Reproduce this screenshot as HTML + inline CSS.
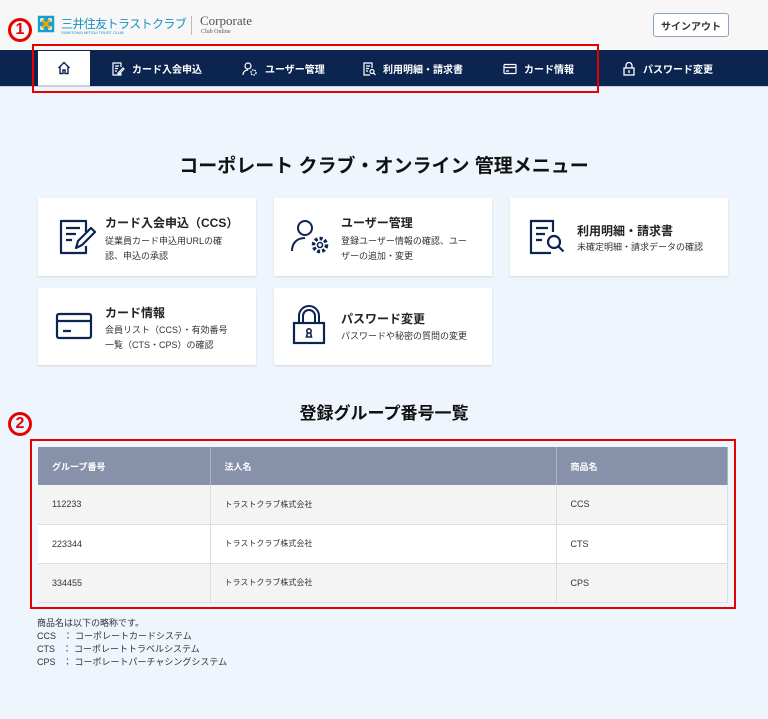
<!DOCTYPE html>
<html><head><meta charset="utf-8"><style>
*{margin:0;padding:0;box-sizing:border-box}
body{width:768px;height:719px;background:#eef5fc;font-family:"Liberation Sans","Noto Sans CJK JP",sans-serif;position:relative;overflow:hidden;color:#222}
.abs{position:absolute}
.hdr{left:0;top:0;width:768px;height:50px;background:#f7f7f7}
.nav{left:0;top:50px;width:768px;height:37px;background:#0b2550;border-bottom:1px solid #c8cfd8}
.ni{top:50px;height:37px;color:#fff;font-size:10px;font-weight:bold;display:flex;align-items:center;gap:7px}
.card{background:#fff;box-shadow:0 1px 2px rgba(0,0,0,.12);width:218px}
.card .t{position:absolute;left:67px;font-size:12px;font-weight:bold}
.card .d{position:absolute;left:67px;font-size:9px;line-height:15px;color:#333}
.card svg{position:absolute}
h2{position:absolute;width:768px;text-align:center;font-size:19px;font-weight:bold;color:#111}
table{position:absolute;left:38px;top:447px;width:690px;border-collapse:collapse;font-size:9px}
th{background:#8792aa;color:#fff;height:38px;text-align:left;padding-left:14px;border-right:1px solid #aab2c4;font-size:9px}
td{height:39px;padding-left:14px;border-right:1px solid #ddd;border-bottom:1px solid #ddd;color:#333}
tr:nth-child(even) td{background:#f4f4f4}
tr:nth-child(odd) td{background:#fff}
.red{border:2px solid #e60000}
.num{color:#e60000;font-weight:bold;width:24px;height:24px;border:3px solid #e60000;border-radius:50%;display:flex;align-items:center;justify-content:center;font-size:16px}
</style></head><body>
<div class="abs hdr"></div>
<svg class="abs" style="left:37px;top:15px" width="18" height="18" viewBox="0 0 18 18"><path d="M2 2h6v6H2zM10 2h6v6h-6zM2 10h6v6H2zM10 10h6v6h-6z" fill="none" stroke="#1aa0c8" stroke-width="2.4"/><path d="M5 5l8 8M13 5l-8 8" stroke="#f2a900" stroke-width="2.4"/></svg>
<div class="abs" style="left:61px;top:15px;font-size:12px;color:#1b8fc0;letter-spacing:-0.6px;white-space:nowrap">三井住友トラストクラブ</div>
<div class="abs" style="left:61px;top:30px;font-size:4px;color:#1b8fc0">SUMITOMO MITSUI TRUST CLUB</div>
<div class="abs" style="left:191px;top:16px;width:1px;height:19px;background:#bbb"></div>
<div class="abs" style="left:200px;top:13px;font-family:'Liberation Serif',serif;font-size:13px;color:#555">Corporate</div>
<div class="abs" style="left:201px;top:29px;font-family:'Liberation Serif',serif;font-size:6px;color:#555">Club Online</div>
<div class="abs" style="left:653px;top:13px;width:76px;height:24px;border:1px solid #8ea4c4;border-radius:3px;background:#fff;font-size:10px;font-weight:bold;color:#333;display:flex;align-items:center;justify-content:center">サインアウト</div>
<div class="abs nav"></div>
<div class="abs" style="left:38px;top:51px;width:52px;height:36px;background:#fff;border-bottom:2px solid #c8cfd8"></div>
<svg class="abs" style="left:57px;top:61px" width="14" height="14" viewBox="0 0 14 14"><path d="M1.5 7L7 1.5 12.5 7M3 6v6.5h3V9h2v3.5h3V6" fill="none" stroke="#0b2550" stroke-width="1.4"/></svg>
<div class="abs ni" style="left:111px"><svg width="14" height="14" viewBox="0 0 14 14"><path d="M10 5V1H2v12h8V11M4 4h4M4 6.5h3M4 9h2M7 11l5-5 1 1-5 5H7z" fill="none" stroke="#fff" stroke-width="1.2"/></svg>カード入会申込</div>
<div class="abs ni" style="left:242px"><svg width="16" height="14" viewBox="0 0 16 14"><circle cx="6" cy="4" r="3" fill="none" stroke="#fff" stroke-width="1.2"/><path d="M1 13c0-3 2-5 5-5" fill="none" stroke="#fff" stroke-width="1.2"/><circle cx="11.5" cy="10.5" r="2.5" fill="none" stroke="#fff" stroke-width="1.5" stroke-dasharray="1.5 1"/></svg>ユーザー管理</div>
<div class="abs ni" style="left:362px"><svg width="14" height="14" viewBox="0 0 14 14"><path d="M10 6V1H2v12h6M4 4h4M4 6.5h3M4 9h2" fill="none" stroke="#fff" stroke-width="1.2"/><circle cx="10" cy="9.5" r="2" fill="none" stroke="#fff" stroke-width="1.2"/><path d="M11.5 11l2 2" stroke="#fff" stroke-width="1.2"/></svg>利用明細・請求書</div>
<div class="abs ni" style="left:503px"><svg width="14" height="12" viewBox="0 0 14 12"><rect x="1" y="1.5" width="12" height="9" rx="1" fill="none" stroke="#fff" stroke-width="1.2"/><path d="M1 4.5h12M3 8h3" stroke="#fff" stroke-width="1.2"/></svg>カード情報</div>
<div class="abs ni" style="left:622px"><svg width="14" height="15" viewBox="0 0 14 15"><path d="M4 7V4.5a3 3 0 016 0V7" fill="none" stroke="#fff" stroke-width="1.3"/><rect x="2" y="7" width="10" height="7" fill="none" stroke="#fff" stroke-width="1.3"/><path d="M7 9v3" stroke="#fff" stroke-width="1.3"/></svg>パスワード変更</div>
<div class="abs red" style="left:32px;top:44px;width:567px;height:49px"></div>
<div class="abs num" style="left:8px;top:18px">1</div>

<h2 style="top:151px">コーポレート クラブ・オンライン 管理メニュー</h2>

<div class="abs card" style="left:38px;top:198px;height:78px">
<svg style="left:20px;top:20px" width="38" height="38" viewBox="0 0 38 38"><path d="M28 14V3H3v32h25V28M8 10h14M8 16h10M8 22h6M18 30l2-7 13-13 4 4-13 13z" fill="none" stroke="#0b2550" stroke-width="2.2" stroke-linejoin="round"/></svg>
<div class="t" style="top:16px">カード入会申込（CCS）</div><div class="d" style="top:36px">従業員カード申込用URLの確<br>認、申込の承認</div></div>
<div class="abs card" style="left:274px;top:198px;height:78px">
<svg style="left:16px;top:20px" width="42" height="38" viewBox="0 0 42 38"><circle cx="15" cy="10" r="7" fill="none" stroke="#0b2550" stroke-width="2"/><path d="M2 33c0-8 5-13 13-13" fill="none" stroke="#0b2550" stroke-width="2"/><circle cx="30" cy="27" r="6.5" fill="none" stroke="#0b2550" stroke-width="3.5" stroke-dasharray="3 2"/><circle cx="30" cy="27" r="2.5" fill="none" stroke="#0b2550" stroke-width="1.6"/></svg>
<div class="t" style="top:16px">ユーザー管理</div><div class="d" style="top:36px">登録ユーザー情報の確認、ユー<br>ザーの追加・変更</div></div>
<div class="abs card" style="left:510px;top:198px;height:78px">
<svg style="left:18px;top:20px" width="42" height="40" viewBox="0 0 42 40"><path d="M25 14V3H3v32h20M8 10h12M8 16h9M8 22h6" fill="none" stroke="#0b2550" stroke-width="2.2"/><circle cx="26" cy="24" r="6" fill="none" stroke="#0b2550" stroke-width="2.2"/><path d="M30.5 28.5l5 5" stroke="#0b2550" stroke-width="2.2"/></svg>
<div class="t" style="top:24px">利用明細・請求書</div><div class="d" style="top:42px">未確定明細・請求データの確認</div></div>
<div class="abs card" style="left:38px;top:288px;height:77px">
<svg style="left:17px;top:24px" width="38" height="30" viewBox="0 0 38 30"><rect x="2" y="2" width="34" height="24" rx="2" fill="none" stroke="#0b2550" stroke-width="2.2"/><path d="M2 9h34M8 19h8" stroke="#0b2550" stroke-width="2.2"/></svg>
<div class="t" style="top:16px">カード情報</div><div class="d" style="top:35px">会員リスト（CCS）・有効番号<br>一覧（CTS・CPS）の確認</div></div>
<div class="abs card" style="left:274px;top:288px;height:77px">
<svg style="left:18px;top:17px" width="34" height="40" viewBox="0 0 34 40"><path d="M7 18V11a10 10 0 0120 0v7M11 18v-7a6 6 0 0112 0v7" fill="none" stroke="#0b2550" stroke-width="2"/><rect x="2" y="18" width="30" height="20" fill="none" stroke="#0b2550" stroke-width="2.2"/><circle cx="17" cy="26" r="2.2" fill="none" stroke="#0b2550" stroke-width="1.6"/><path d="M15.5 28l-1 4h5l-1-4" fill="none" stroke="#0b2550" stroke-width="1.6"/></svg>
<div class="t" style="top:22px">パスワード変更</div><div class="d" style="top:41px">パスワードや秘密の質問の変更</div></div>

<h2 style="top:399px;font-size:17px">登録グループ番号一覧</h2>
<div class="abs num" style="left:8px;top:412px">2</div>
<table>
<tr><th style="width:172px">グループ番号</th><th style="width:346px">法人名</th><th>商品名</th></tr>
<tr><td>112233</td><td style="font-size:8px">トラストクラブ株式会社</td><td>CCS</td></tr>
<tr><td>223344</td><td style="font-size:8px">トラストクラブ株式会社</td><td>CTS</td></tr>
<tr><td>334455</td><td style="font-size:8px">トラストクラブ株式会社</td><td>CPS</td></tr>
</table>
<div class="abs red" style="left:30px;top:439px;width:706px;height:170px"></div>
<div class="abs" style="left:37px;top:617px;font-size:9px;line-height:13px;color:#333">商品名は以下の略称です。<br>CCS &nbsp;&nbsp;： コーポレートカードシステム<br>CTS &nbsp;&nbsp;： コーポレートトラベルシステム<br>CPS &nbsp;&nbsp;： コーポレートパーチャシングシステム</div>
</body></html>
